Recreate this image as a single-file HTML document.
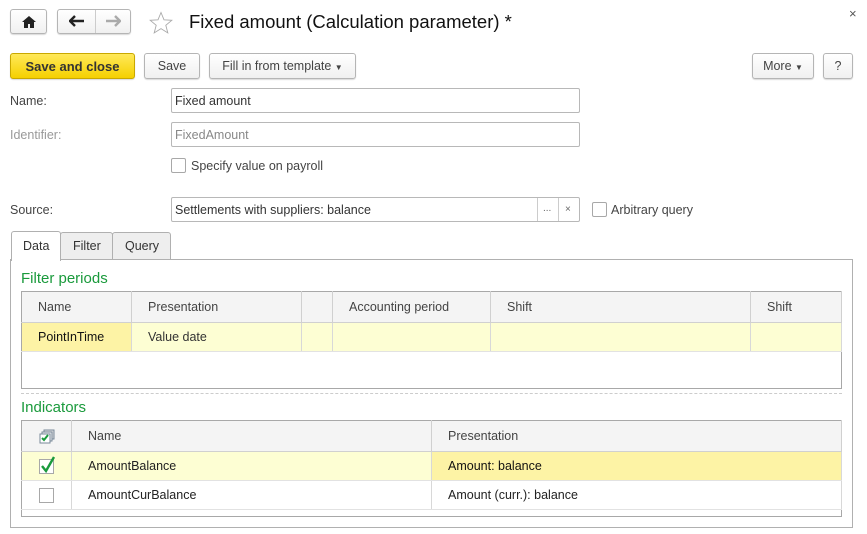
<!DOCTYPE html>
<html><head><meta charset="utf-8"><style>
*{box-sizing:border-box}
body{margin:0;width:867px;height:534px;background:#fff;font-family:"Liberation Sans",Arial,sans-serif;font-size:12.5px;color:#333;position:relative;overflow:hidden}
.a{position:absolute}
.btn{position:absolute;border:1px solid #b5b5b5;border-radius:3px;background:linear-gradient(#fff,#f0f0f0);box-shadow:0 1px 1px rgba(0,0,0,.15);text-align:center;line-height:25px;color:#444}
.inp{position:absolute;border:1px solid #b8b8b8;border-radius:2px;height:25px;line-height:24px;padding-left:3px;background:#fff}
.cb{position:absolute;width:15px;height:15px;border:1px solid #a8a8a8;border-radius:2px;background:#fff}
.lbl{position:absolute;color:#444}
.green{position:absolute;color:#1a9a3c;font-size:15px}
table{position:absolute;border-collapse:collapse;border:1px solid #a8a8a8}
td{border-right:1px solid #d8d8d8;border-bottom:1px solid #e2e2e2;padding:0 0 0 16px;white-space:nowrap;overflow:hidden}
tr.h td{background:#f4f4f4;border-right:1px solid #d0d0d0;border-bottom:1px solid #d0d0d0;color:#444}
tr.y td{background:#fdfed3}
</style></head><body>
<div class="btn" style="left:10px;top:9px;width:37px;height:25px"><svg width="14" height="12" viewBox="0 0 14 12" style="margin-top:6px;vertical-align:top"><path d="M7 0L0 6h2v6h4V8h2v4h4V6h2z" fill="#222"/></svg></div>
<div class="btn" style="left:57px;top:9px;width:74px;height:25px"></div>
<div class="a" style="left:95px;top:10px;width:1px;height:23px;background:#ccc"></div>
<svg class="a" style="left:69px;top:15px" width="16" height="12"><path d="M1 6h14M6 1L1 6l5 5" stroke="#222" stroke-width="2.4" fill="none"/></svg>
<svg class="a" style="left:105px;top:15px" width="16" height="12"><path d="M1 6h14M10 1l5 5-5 5" stroke="#aaa" stroke-width="2.4" fill="none"/></svg>
<svg class="a" style="left:149px;top:11px" width="24" height="23"><path d="M12 1.5l3 7.3 7.8.5-6 5 2 7.6L12 17.6 5.2 21.9l2-7.6-6-5 7.8-.5z" fill="none" stroke="#aaa" stroke-width="0.9"/></svg>
<div class="a" style="left:189px;top:11px;font-size:18.5px;color:#111">Fixed amount (Calculation parameter) *</div>
<div class="a" style="left:849px;top:6px;color:#555;font-size:13px">×</div>
<div class="btn" style="left:10px;top:53px;width:125px;height:26px;background:linear-gradient(#ffe95a,#f5d000);border-color:#c9a800;font-weight:bold;color:#333;font-size:13px">Save and close</div>
<div class="btn" style="left:144px;top:53px;width:56px;height:26px">Save</div>
<div class="btn" style="left:209px;top:53px;width:147px;height:26px">Fill in from template <span style="font-size:8px">▼</span></div>
<div class="btn" style="left:752px;top:53px;width:62px;height:26px">More <span style="font-size:8px">▼</span></div>
<div class="btn" style="left:823px;top:53px;width:30px;height:26px">?</div>
<div class="lbl" style="left:10px;top:94px">Name:</div>
<div class="inp" style="left:171px;top:88px;width:409px">Fixed amount</div>
<div class="lbl" style="left:10px;top:128px;color:#999">Identifier:</div>
<div class="inp" style="left:171px;top:122px;width:409px;color:#888">FixedAmount</div>
<div class="cb" style="left:171px;top:158px"></div>
<div class="lbl" style="left:191px;top:159px">Specify value on payroll</div>
<div class="lbl" style="left:10px;top:203px">Source:</div>
<div class="inp" style="left:171px;top:197px;width:409px">Settlements with suppliers: balance</div>
<div class="a" style="left:537px;top:198px;width:1px;height:23px;background:#ccc"></div>
<div class="a" style="left:558px;top:198px;width:1px;height:23px;background:#ccc"></div>
<div class="a" style="left:543px;top:203px;color:#666;font-size:10px">...</div>
<div class="a" style="left:565px;top:204px;color:#666;font-size:10px">×</div>
<div class="cb" style="left:592px;top:202px"></div>
<div class="lbl" style="left:611px;top:203px">Arbitrary query</div>
<div class="a" style="left:10px;top:259px;width:843px;height:269px;border:1px solid #b0b0b0"></div>
<div class="a" style="left:11px;top:231px;width:50px;height:30px;border:1px solid #b0b0b0;border-bottom:none;background:#fff;border-radius:3px 3px 0 0;padding:7px 0 0 11px;color:#333">Data</div>
<div class="a" style="left:60px;top:232px;width:53px;height:28px;border:1px solid #b0b0b0;background:#eee;border-radius:3px 3px 0 0;padding:6px 0 0 12px">Filter</div>
<div class="a" style="left:112px;top:232px;width:59px;height:28px;border:1px solid #b0b0b0;background:#eee;border-radius:3px 3px 0 0;padding:6px 0 0 12px">Query</div>
<div class="green" style="left:21px;top:270px">Filter periods</div>
<table style="left:21px;top:291px;width:821px;height:98px">
<tr class="h" style="height:31px"><td style="width:110px">Name</td><td style="width:170px">Presentation</td><td style="width:31px"></td><td style="width:158px">Accounting period</td><td style="width:260px">Shift</td><td>Shift</td></tr>
<tr class="y" style="height:29px"><td style="background:#fdf3a5;color:#111">PointInTime</td><td>Value date</td><td></td><td></td><td></td><td></td></tr>
<tr><td style="border:none" colspan="6"></td></tr>
</table>
<div class="a" style="left:21px;top:393px;width:821px;border-top:1px dashed #ccc"></div>
<div class="green" style="left:21px;top:399px">Indicators</div>
<table style="left:21px;top:420px;width:821px;height:97px">
<tr class="h" style="height:31px"><td style="width:50px;padding:0;text-align:center"><svg width="16" height="15" style="vertical-align:middle"><rect x="5" y="1" width="10" height="9" fill="#ddd" stroke="#789"/><rect x="3" y="3" width="10" height="9" fill="#eee" stroke="#789"/><rect x="1" y="5" width="10" height="9" fill="#fff" stroke="#789"/><path d="M3 9l2 2 4-5" stroke="#1a9a3c" stroke-width="2" fill="none"/></svg></td><td style="width:360px">Name</td><td>Presentation</td></tr>
<tr class="y" style="height:29px"><td style="padding:0;text-align:center"><span style="display:inline-block;width:15px;height:15px;border:1px solid #a8a8a8;background:#fff;position:relative;vertical-align:middle"><svg class="a" style="left:0;top:-4px" width="16" height="18"><path d="M2 10l4 5 8-14" stroke="#1a9a3c" stroke-width="2.4" fill="none"/></svg></span></td><td style="color:#222">AmountBalance</td><td style="background:#fdf3a5;color:#111">Amount: balance</td></tr>
<tr style="height:29px"><td style="padding:0;text-align:center"><span style="display:inline-block;width:15px;height:15px;border:1px solid #a8a8a8;background:#fff;vertical-align:middle"></span></td><td style="color:#222">AmountCurBalance</td><td style="color:#222">Amount (curr.): balance</td></tr>
<tr><td style="border:none" colspan="3"></td></tr>
</table>
</body></html>
